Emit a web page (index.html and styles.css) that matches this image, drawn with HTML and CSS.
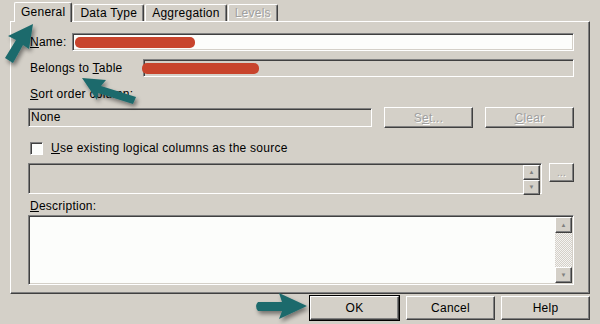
FILE: index.html
```html
<!DOCTYPE html>
<html lang="en">
  <head>
    <meta charset="UTF-8" />
    <meta name="viewport" content="width=device-width, initial-scale=1.0" />
    <title>Logical Column</title>
    <link rel="stylesheet" href="styles.css">
  </head>
  <body>
    <div class="dialog">
      <div class="tabs">
        <div class="tab active">General</div>
        <div class="tab">Data Type</div>
        <div class="tab">Aggregation</div>
        <div class="tab disabled">Levels</div>
      </div>

      <div class="panel">
        <div class="row name-row">
          <label class="label"><u>N</u>ame:</label>
          <div class="field white grow"><span class="redact redact-name"></span></div>
        </div>
        <div class="row table-row">
          <label class="label">Belongs to <u>T</u>able</label>
          <div class="field grow"><span class="redact redact-table"></span></div>
        </div>

        <div class="label sort-label"><u>S</u>ort order column:</div>
        <div class="row sort-row">
          <div class="field grow text">None</div>
          <button class="btn disabled set-btn">S<u>e</u>t...</button>
          <button class="btn disabled clear-btn"><u>C</u>lear</button>
        </div>

        <div class="row check-row">
          <span class="checkbox"></span>
          <span class="label"><u>U</u>se existing logical columns as the source</span>
        </div>

        <div class="row list-row">
          <div class="field grow listbox">
            <div class="spin">
              <span class="sbtn">&#9650;</span>
              <span class="sbtn">&#9660;</span>
            </div>
          </div>
          <button class="btn disabled dots-btn">...</button>
        </div>

        <div class="label desc-label"><u>D</u>escription:</div>
        <div class="field white textarea">
          <div class="scrollbar">
            <span class="sbtn">&#9650;</span>
            <span class="track"></span>
            <span class="sbtn">&#9660;</span>
          </div>
        </div>
      </div>

      <div class="footer">
        <button class="btn default">OK</button>
        <button class="btn">Cancel</button>
        <button class="btn">Help</button>
      </div>
    </div>

    <!-- callout arrows drawn over the screenshot -->
    <svg class="arrows" width="600" height="324" viewBox="0 0 600 324">
      <defs>
        <filter id="shadow" x="-30%" y="-30%" width="160%" height="160%">
          <feDropShadow dx="2" dy="3" stdDeviation="2" flood-color="#000" flood-opacity="0.45" />
        </filter>
      </defs>
      <g fill="#1d6a6c" filter="url(#shadow)">
        <path d="M33 24 L8 36 L16 40 L5 58 L13 63 L23 45 L29 49 Z" />
        <path d="M82 78 L106 80 L101 86 L136 97 L133 104 L98 93 L97 100 Z" />
        <path d="M307 306 L279 293 L282 302 L258 302 Q254 306 258 311 L282 311 L279 319 Z" />
      </g>
    </svg>
  </body>
</html>
```

FILE: styles.css
```css
body {
  margin: 0;
  width: 600px;
  height: 324px;
  overflow: hidden;
  background-color: #d4d0c8;
  font-family: "Liberation Sans", Arial, sans-serif;
  font-size: 12px;
  letter-spacing: 0.25px;
  color: #000;
  position: relative;
}
u {
  text-decoration: underline;
  text-underline-offset: 1px;
}
.dialog {
  padding: 2px 0 0 10px;
  width: 580px;
}

/* tabs */
.tabs {
  display: flex;
  height: 19px;
  padding-left: 4px;
  align-items: flex-end;
}
.tab {
  height: 16px;
  line-height: 16px;
  padding: 0 6px;
  border: 1px solid #fff;
  border-right-color: #404040;
  border-bottom: none;
  box-shadow: inset -1px 0 #808080;
  border-radius: 2px 2px 0 0;
  margin-right: 1px;
}
.tab.active {
  height: 19px;
  line-height: 19px;
  padding: 0 6px;
  position: relative;
  z-index: 1;
  margin-bottom: -1px;
  background: #d4d0c8;
}
.tab.disabled {
  color: #a0a0a0;
  text-shadow: 1px 1px #fff;
}

.panel {
  height: 260px;
  border: 1px solid #fff;
  border-right-color: #404040;
  border-bottom-color: #404040;
  box-shadow: inset -1px -1px #808080;
  padding: 11px 15px 0 17px;
}

/* rows */
.row {
  display: flex;
  align-items: center;
}
.label {
  padding-left: 2px;
  white-space: nowrap;
}
.grow {
  flex: 1;
}
.field {
  position: relative;
  border: 1px solid;
  border-color: #808080 #fff #fff #808080;
  box-shadow: inset 1px 1px #404040, inset -1px -1px #d4d0c8;
  background: #d4d0c8;
}
.white {
  background: #fcfdfb;
}
.name-row .label {
  width: 42px;
}
.name-row .field {
  height: 16px;
}
.table-row {
  margin-top: 8px;
}
.table-row .label {
  width: 113px;
}
.table-row .field {
  height: 16px;
}
.redact {
  position: absolute;
  top: 3px;
  height: 11px;
  background: #c8442c;
  border-radius: 5px;
}
.redact-name {
  left: 2px;
  width: 120px;
}
.redact-table {
  left: -2px;
  width: 117px;
}
.sort-label {
  margin-top: 10px;
  height: 15px;
}
.sort-row {
  margin-top: 5px;
}
.sort-row .field {
  height: 17px;
  line-height: 17px;
  padding-left: 2px;
}
.btn {
  font-family: inherit;
  font-size: 12px;
  letter-spacing: 0.25px;
  color: #000;
  background: #d4d0c8;
  border: 1px solid;
  border-color: #fff #404040 #404040 #fff;
  box-shadow: inset -1px -1px #808080;
  padding: 0;
  border-radius: 0;
}
.btn.disabled {
  color: #a0a0a0;
  text-shadow: 1px 1px #fff;
}
.set-btn {
  width: 89px;
  height: 21px;
  margin-left: 12px;
}
.clear-btn {
  width: 89px;
  height: 21px;
  margin-left: 12px;
}
.check-row {
  margin-top: 13px;
  height: 14px;
}
.checkbox {
  width: 11px;
  height: 11px;
  margin: 0 6px 0 2px;
  background: #fcfdfb;
  border: 1px solid;
  border-color: #808080 #fff #fff #808080;
  box-shadow: inset 1px 1px #404040;
}
.list-row {
  margin-top: 8px;
  align-items: flex-start;
}
.listbox {
  height: 29px;
  flex: 0 0 512px;
}
.spin {
  position: absolute;
  right: 1px;
  top: 1px;
  display: flex;
  flex-direction: column;
}
.sbtn {
  width: 15px;
  height: 13px;
  font-size: 6px;
  line-height: 13px;
  text-align: center;
  color: #808080;
  background: #d4d0c8;
  border: 1px solid;
  border-color: #fff #404040 #404040 #fff;
  box-shadow: inset -1px -1px #808080;
}
.dots-btn {
  width: 26px;
  height: 19px;
  margin-left: 7px;
  font-size: 10px;
}
.desc-label {
  margin-top: 5px;
  height: 15px;
}
.textarea {
  margin-top: 1px;
  height: 68px;
}
.scrollbar {
  position: absolute;
  right: 1px;
  top: 1px;
  bottom: 1px;
  display: flex;
  flex-direction: column;
}
.scrollbar .sbtn {
  height: 14px;
  line-height: 14px;
}
.scrollbar .track {
  flex: 1;
  background-color: #e6e4e0;
  background-image: repeating-conic-gradient(#d4d0c8 0 25%, #f4f3f1 0 50%);
  background-size: 2px 2px;
}

/* bottom buttons */
.footer {
  display: flex;
  justify-content: flex-end;
  gap: 6px;
  margin-top: 2px;
}
.footer .btn {
  width: 89px;
  height: 24px;
}
.footer .btn.default {
  outline: 1px solid #000;
  outline-offset: 0;
  width: 89px;
  margin-right: 1px;
}

.arrows {
  position: absolute;
  left: 0;
  top: 0;
  pointer-events: none;
}
```
